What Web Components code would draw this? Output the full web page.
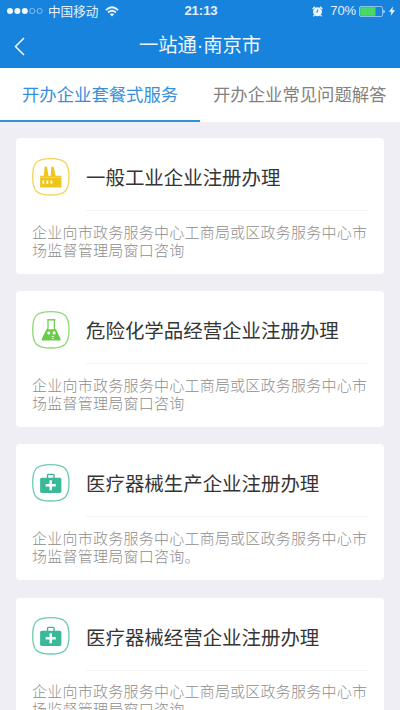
<!DOCTYPE html>
<html lang="zh-CN">
<head>
<meta charset="utf-8">
<title>一站通·南京市</title>
<style>
html,body{margin:0;height:100%;overflow:hidden}
body{background:#eeeef4;font-family:"Noto Sans CJK SC",sans-serif}
</style>
</head>
<body>
<service-app></service-app>
<script>
function define(name, html) {
  customElements.define(name, class extends HTMLElement {
    constructor() {
      super();
      const t = document.createElement('template');
      t.innerHTML = html;
      this.attachShadow({mode: 'open'}).append(t.content.cloneNode(true));
    }
  });
}

define('status-bar', `
<style>
:host{display:grid;grid-template-columns:1fr auto 1fr;align-items:center;height:22px;padding:0 5px 0 7px;box-sizing:border-box;color:#e4f1fb;font:12.6px/22px "Noto Sans CJK SC",sans-serif}
div{display:flex;align-items:center;white-space:nowrap}
.dots{display:block;margin-right:4px}
.wifi{margin-left:7px}
.time{font:bold 13.2px/22px "Liberation Sans",sans-serif;letter-spacing:-.1px}
.right{justify-content:flex-end}
.pct{font:13px/22px "Liberation Sans",sans-serif;letter-spacing:-.1px;margin:0 3px 0 7px}
.bolt{margin-left:4px}
</style>
<div><svg class="dots" width="37" height="8" viewBox="0 0 37 8"><g fill="#f2f8fd"><circle cx="3" cy="4" r="3"/><circle cx="10.4" cy="4" r="3"/><circle cx="17.8" cy="4" r="3"/></g><g fill="none" stroke="#9fcaf0" stroke-width=".8"><circle cx="25.2" cy="4" r="2.6"/><circle cx="32.6" cy="4" r="2.6"/></g></svg><span>中国移动</span>
<svg class="wifi" width="14" height="11" viewBox="0 0 14 11" fill="none" stroke="#eaf5fd" stroke-width="1.7"><path d="M.9 4.1Q7-1.6 13.1 4.1M3.1 6.5Q7 3 10.9 6.5"/><path d="M4.8 8.2Q7 6.3 9.2 8.2L7 10.6Z" fill="#eaf5fd" stroke="none"/></svg></div>
<div class="time">21:13</div>
<div class="right"><svg width="11" height="11" viewBox="0 0 11 11"><circle cx="5.5" cy="5.8" r="4.5" fill="#eef7fd"/><path d="M.6 2.9 2.9.8M8.1.8l2.3 2.1M2.4 9.2 1.4 10.4M8.6 9.2l1 1.2" stroke="#eef7fd" stroke-width="1.3"/><path d="M5.7 3.3V6H3.8" fill="none" stroke="#1883dc" stroke-width=".9"/></svg>
<span class="pct">70%</span>
<svg width="26" height="11" viewBox="0 0 26 11"><rect x=".5" y=".5" width="23" height="10" rx="1.5" fill="none" stroke="#94c9f2" stroke-width=".9"/><path d="M1.2 1.2h15.300v8.600H1.200z" fill="#4bd965"/><path d="M24.300 3.500q1.500.3 1.500 2t-1.500 2z" fill="#c3e0f6"/></svg>
<svg class="bolt" width="6" height="10" viewBox="0 0 6 10"><path d="M4 .4 0 5.700h2.400L1.700 9.800 6 4.200H3.400Z" fill="#f2f9fe"/></svg></div>`);

define('nav-bar', `
<style>
:host{display:grid;grid-template-columns:40px 1fr 40px;align-items:center;height:46px;color:#eef7fe}
svg{margin:3px 0 0 14px}
h1{margin:0;text-align:center;font-weight:400;font-size:19.3px;font-family:"Liberation Sans","Noto Sans CJK SC",sans-serif;line-height:47px;height:46px;white-space:nowrap}
</style>
<svg width="12" height="19" viewBox="0 0 12 19" fill="none" stroke="#e9f5fe" stroke-width="1.6"><path d="M10 1 1.5 9.5 10 18"/></svg>
<h1>一站通·南京市</h1>`);

define('tab-item', `
<style>
:host{display:block;box-sizing:border-box;height:54px;color:#828282;font-size:17.35px;line-height:51px;white-space:nowrap;padding-left:13px;border-bottom:2px solid transparent}
:host([active]){color:#378fda;padding-left:22px;border-color:#378fd7}
</style><slot></slot>`);

define('tab-bar', `
<style>
:host{display:grid;grid-template-columns:1fr 1fr;background:#fff;height:54px}
</style><slot></slot>`);

const glyphs = {
  factory: ['#edc51e', `<path d="M12.3 9.500Q12.400 8.500 13.600 8.500T15 9.500L16 16v2h-4.200zM19 9.500Q19.100 8.500 20.300 8.500T21.700 9.500L23.300 18h-4.800z"/><path fill-rule="evenodd" d="M8 17.500h21V29H8zM10.300 22.300v3.200h1.700v-3.200zM14.300 22.300v3.200H16v-3.200zM18.300 22.300v3.200H20v-3.200z"/><path d="M8 19h21" stroke="#fff" stroke-width=".5" opacity=".7"/>`],
  flask: ['#6acb4b', `<path d="M15.800 9v8L11.500 26h14.800L22 17V9" fill="none" stroke="currentColor" stroke-width="1.200"/><path d="M15 8h8v1.400h-8z"/><path fill-rule="evenodd" d="M14.300 18h9.300L28.200 27.700q.6 1.500-1 1.500H10.600q-1.600 0-1-1.500zM16.500 20.200a1.500 1.500 0 1 0 .1 3 1.500 1.500 0 0 0-.1-3zM21.800 20a1.600 1.600 0 1 0 .1 3.200 1.600 1.600 0 0 0-.1-3.200zM20.500 24.500a1.500 1.500 0 1 0 .1 3 1.500 1.500 0 0 0-.1-3z"/>`],
  medical: ['#39b99a', `<path d="M15.300 14.500v-3.500q0-.8.8-.8h4.800q.8 0 .8.8v3.500" fill="none" stroke="currentColor" stroke-width="1.400"/><rect x="8" y="13.500" width="21" height="15" rx="1.600"/><path d="M18.500 16v10M13.500 21h10" stroke="#fff" stroke-width="2.400"/>`]
};
customElements.define('service-icon', class extends HTMLElement {
  connectedCallback() {
    const [color, art] = glyphs[this.getAttribute('kind')];
    this.attachShadow({mode: 'open'}).innerHTML = `
<style>:host{display:block;width:38px;height:38px;color:${color}}svg{display:block}</style>
<svg width="38" height="38" viewBox="0 0 37.500 37.500" fill="currentColor"><path d="M18.500 .7C32.500 .7 36.500 4.500 36.500 18.500S32.500 36.500 18.500 36.500 .7 32.500 .7 18.500 4.500 .7 18.500 .7Z" fill="none" stroke="currentColor" stroke-width="1.300" opacity=".75"/>${art}</svg>`;
  }
});

define('service-card', `
<style>
:host{display:block;box-sizing:border-box;width:368px;height:136px;background:#fff;border-radius:4px;padding:0 16px}
header{display:grid;grid-template-columns:38px 1fr;column-gap:16px;align-items:center;height:73px}
h2{margin:0;padding-top:4px;line-height:69px;font-weight:400;font-size:19.45px;color:#353535;white-space:nowrap;border-bottom:1px solid #f4f4f4;box-sizing:border-box;height:73px}
.icon{padding-top:4px}
p{margin:11.5px 0 0;font-size:15px;letter-spacing:.24px;line-height:18px;color:#8e8e8e;white-space:nowrap;font-weight:300}
</style>
<header><div class="icon"><slot name="icon"></slot></div><h2><slot name="title"></slot></h2></header>
<p><slot></slot></p>`);

define('service-app', `
<style>
:host{display:block;width:400px;height:710px;overflow:hidden}
.top{background:#1883dc}
main{display:grid;row-gap:17.2px;padding:16px}
</style>
<div class="top"><status-bar></status-bar><nav-bar></nav-bar></div>
<tab-bar><tab-item active>开办企业套餐式服务</tab-item><tab-item>开办企业常见问题解答</tab-item></tab-bar>
<main>
<service-card><service-icon slot="icon" kind="factory"></service-icon><span slot="title">一般工业企业注册办理</span>企业向市政务服务中心工商局或区政务服务中心市<br>场监督管理局窗口咨询</service-card>
<service-card><service-icon slot="icon" kind="flask"></service-icon><span slot="title">危险化学品经营企业注册办理</span>企业向市政务服务中心工商局或区政务服务中心市<br>场监督管理局窗口咨询</service-card>
<service-card><service-icon slot="icon" kind="medical"></service-icon><span slot="title">医疗器械生产企业注册办理</span>企业向市政务服务中心工商局或区政务服务中心市<br>场监督管理局窗口咨询。</service-card>
<service-card><service-icon slot="icon" kind="medical"></service-icon><span slot="title">医疗器械经营企业注册办理</span>企业向市政务服务中心工商局或区政务服务中心市<br>场监督管理局窗口咨询。</service-card>
</main>`);
</script>
</body>
</html>
